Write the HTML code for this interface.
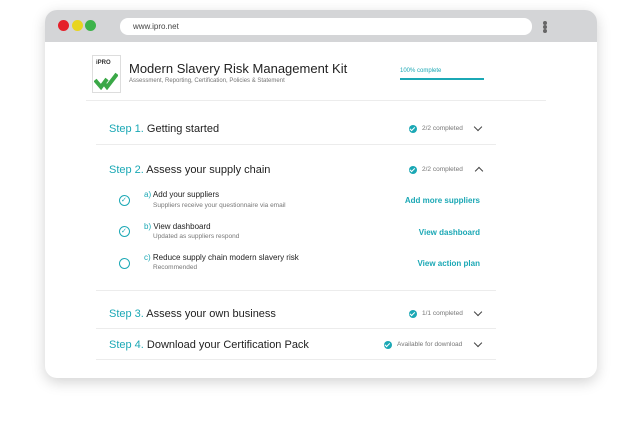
<!DOCTYPE html><html><head><style>
body{margin:0;width:640px;height:427px;background:#fff;font-family:"Liberation Sans",sans-serif;position:relative;overflow:hidden}
.a{position:absolute;white-space:nowrap}
.frame{position:absolute;left:45px;top:10px;width:552px;height:368px;border-radius:12px;background:#fff;box-shadow:0 4px 14px rgba(0,0,0,.18);overflow:hidden}
.bar{position:absolute;left:0;top:0;width:552px;height:32px;background:#d4d5d7}
.dot{position:absolute;top:10px;width:11px;height:11px;border-radius:50%}
.t{color:#1ba8b5}
.h{font-size:11px;color:#222}
.sm{font-size:6.5px;color:#777}
.line{position:absolute;left:96px;width:400px;height:1px;background:#ececec}
.chk{position:absolute;width:8px;height:8px;border-radius:50%;background:#1ba8b5}
.chk:after{content:"";position:absolute;left:2.4px;top:1.3px;width:2px;height:3.5px;border:solid #fff;border-width:0 1.2px 1.2px 0;transform:rotate(45deg)}
.ring{position:absolute;width:9px;height:9px;border:1.2px solid #1ba8b5;border-radius:50%}
.chev{position:absolute;width:5px;height:5px;border:solid #444;border-width:0 1.3px 1.3px 0}
.lk{font-size:8px;color:#1ba8b5;font-weight:bold}
</style></head><body>
<div class="frame">
<div class="bar">
<div class="dot" style="left:13px;background:#e5202a"></div>
<div class="dot" style="left:27px;background:#e8d51f"></div>
<div class="dot" style="left:40px;background:#3db34a"></div>
<div style="position:absolute;left:75px;top:8px;width:412px;height:17px;background:#fff;border-radius:8px"></div>
<div class="a" style="left:88px;top:12px;font-size:8px;color:#444">www.ipro.net</div>
<div style="position:absolute;left:498px;top:11px;width:4px;height:4px;border-radius:50%;background:#666;box-shadow:0 4px 0 #666,0 8px 0 #666"></div>
</div>
</div>
<div style="position:absolute;left:92px;top:55px;width:27px;height:36px;border:1px solid #ddd;background:#fff"></div>
<div class="a" style="left:96px;top:60px;font-size:6px;font-weight:bold;color:#333">iPRO</div>
<svg class="a" style="left:94px;top:70px" width="24" height="20"><path d="M1 10 L7 17 L13 9 M9 12 L13 17 L23 4" stroke="#3aa847" stroke-width="4" fill="none"/></svg>
<div class="a" style="left:129px;top:61px;font-size:13px;color:#222">Modern Slavery Risk Management Kit</div>
<div class="a sm" style="left:129px;top:78px;font-size:6px">Assessment, Reporting, Certification, Policies &amp; Statement</div>
<div class="a t" style="left:400px;top:68px;font-size:6px">100% complete</div>
<div class="a" style="left:400px;top:78px;width:84px;height:2px;background:#1ba8b5"></div>
<div class="line" style="top:100px;left:86px;width:460px"></div>

<div class="a h" style="left:109px;top:123px"><span class="t">Step 1.</span> Getting started</div>
<div class="chk" style="left:409px;top:125px"></div><div class="a sm" style="left:422px;top:125px">2/2 completed</div>
<div class="chev" style="left:475px;top:124px;transform:rotate(45deg)"></div>
<div class="line" style="top:144px"></div>

<div class="a h" style="left:109px;top:164px"><span class="t">Step 2.</span> Assess your supply chain</div>
<div class="chk" style="left:409px;top:166px"></div><div class="a sm" style="left:422px;top:166px">2/2 completed</div>
<div class="chev" style="left:476px;top:168px;transform:rotate(225deg)"></div>

<div class="ring" style="left:119px;top:195px"></div><div class="a t" style="left:121px;top:196px;font-size:7px">✓</div>
<div class="a" style="left:144px;top:190px;font-size:8px;color:#222"><span class="t">a)</span> Add your suppliers</div>
<div class="a sm" style="left:153px;top:202px">Suppliers receive your questionnaire via email</div>
<div class="a lk" style="right:160px;top:196px">Add more suppliers</div>

<div class="ring" style="left:119px;top:226px"></div><div class="a t" style="left:121px;top:227px;font-size:7px">✓</div>
<div class="a" style="left:144px;top:222px;font-size:8px;color:#222"><span class="t">b)</span> View dashboard</div>
<div class="a sm" style="left:153px;top:233px">Updated as suppliers respond</div>
<div class="a lk" style="right:160px;top:228px">View dashboard</div>

<div class="ring" style="left:119px;top:258px"></div>
<div class="a" style="left:144px;top:253px;font-size:8px;color:#222"><span class="t">c)</span> Reduce supply chain modern slavery risk</div>
<div class="a sm" style="left:153px;top:264px">Recommended</div>
<div class="a lk" style="right:160px;top:259px">View action plan</div>
<div class="line" style="top:290px"></div>

<div class="a h" style="left:109px;top:308px"><span class="t">Step 3.</span> Assess your own business</div>
<div class="chk" style="left:409px;top:310px"></div><div class="a sm" style="left:422px;top:310px">1/1 completed</div>
<div class="chev" style="left:475px;top:309px;transform:rotate(45deg)"></div>
<div class="line" style="top:328px"></div>

<div class="a h" style="left:109px;top:339px"><span class="t">Step 4.</span> Download your Certification Pack</div>
<div class="chk" style="left:384px;top:341px"></div><div class="a sm" style="left:397px;top:341px">Available for download</div>
<div class="chev" style="left:475px;top:340px;transform:rotate(45deg)"></div>
<div class="line" style="top:359px"></div>
</body></html>
